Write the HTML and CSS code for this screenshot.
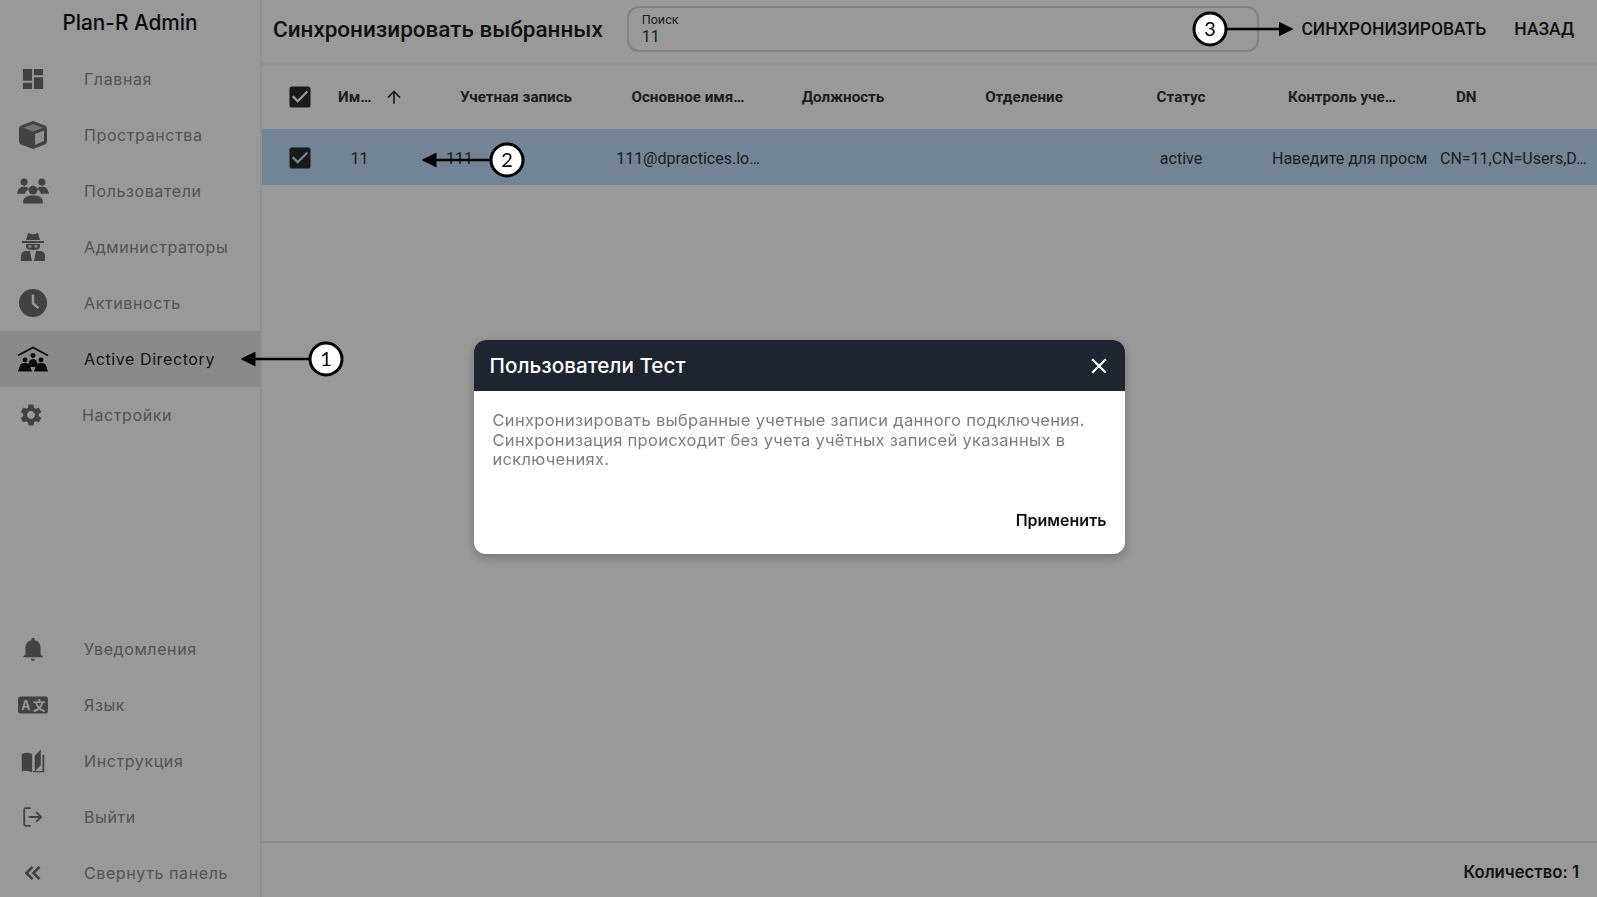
FILE: index.html
```html
<!DOCTYPE html>
<html lang="ru">
<head>
    <meta charset="UTF-8">
    <meta name="viewport" content="width=device-width, initial-scale=1.0">
    <title>Plan-R Admin</title>
    <link rel="stylesheet" href="styles.css">
</head>
<body>
    <div class="app">
        <aside class="sidebar">
            <div class="brand">Plan-R Admin</div>
            <nav class="nav">
                <a class="nav-item">
                    <svg class="nav-icon nav-icon-small" viewBox="0 0 24 24"><path d="M1 1h10v13H1zM13 1h10v7H13zM1 16h10v7H1zM13 10h10v13H13z"/></svg>
                    Главная
                </a>
                <a class="nav-item">
                    <svg class="nav-icon nav-icon-wide" viewBox="0 0 30 30"><path d="M15 1 27 5.500Q29 6.300 29 8.500V21.500Q29 23.700 27 24.500L15 29 3 24.500Q1 23.700 1 21.500V8.500Q1 6.300 3 5.500Z"/><path class="shade" d="M15 4 25 7.700 15 11.400 5 7.700Z"/><path class="light" d="M17 14 26 10.500V21L17 25Z"/></svg>
                    Пространства
                </a>
                <a class="nav-item">
                    <svg class="nav-icon nav-icon-wide" viewBox="0 0 36 30"><circle cx="8" cy="5" r="4"/><circle cx="28" cy="5" r="4"/><path d="M0 18Q1 10 8 10 12 10 14 13 10 14 9 18ZM36 18Q35 10 28 10 24 10 22 13 26 14 27 18Z"/><circle cx="18" cy="14" r="5"/><path d="M7 29V26Q8 20 18 20 28 20 29 26V29Z"/></svg>
                    Пользователи
                </a>
                <a class="nav-item">
                    <svg class="nav-icon nav-icon-wide" viewBox="0 0 26 30"><path d="M8 1 13 2.500 18 1 20 8H6ZM2 9H24V11H2Z"/><path d="M6 12H20V14.500Q20 18 13 18 6 18 6 14.500Z"/><path class="cut" d="M8 13.500H12L11 15.500H9ZM14 13.500H18L17 15.500H15Z"/><path d="M5 19H10L12 29H1V24Q1 20 5 19ZM21 19H16L14 29H25V24Q25 20 21 19Z"/></svg>
                    Администраторы
                </a>
                <a class="nav-item">
                    <svg class="nav-icon nav-icon-wide" viewBox="0 0 30 30"><circle cx="15" cy="15" r="14"/><path class="hand" d="M15 6.500V15.500L20.500 20"/></svg>
                    Активность
                </a>
                <a class="nav-item nav-item-active">
                    <svg class="nav-icon nav-icon-wide" viewBox="0 0 36 30"><path class="roof" d="M1 11 18 2 35 11"/><circle cx="18" cy="11" r="2.800"/><circle cx="9" cy="16" r="2.800"/><circle cx="27" cy="16" r="2.800"/><path d="M13 22Q13 15 18 15 23 15 23 22L21 24H15ZM1 29 4 21Q6 19.500 9 19.500 12 19.500 14 21L17 29ZM19 29 22 21Q24 19.500 27 19.500 30 19.500 32 21L35 29Z"/></svg>
                    Active Directory
                </a>
                <a class="nav-item nav-item-tight">
                    <svg class="nav-icon" viewBox="0 0 24 24"><path d="M19.140 12.940c.04-.3.06-.61.06-.94 0-.32-.02-.64-.07-.94l2.030-1.580c.18-.14.23-.41.12-.61l-1.920-3.320c-.12-.22-.37-.29-.59-.22l-2.390.96c-.5-.38-1.030-.7-1.620-.94l-.36-2.540c-.04-.24-.24-.41-.48-.41h-3.840c-.24 0-.43.17-.47.41l-.36 2.540c-.59.24-1.130.57-1.620.94l-2.390-.96c-.22-.08-.47 0-.59.22L2.740 8.870c-.12.21-.08.47.12.61l2.030 1.580c-.05.3-.09.63-.09.94s.02.64.07.94l-2.030 1.580c-.18.14-.23.41-.12.61l1.920 3.320c.12.22.37.29.59.22l2.390-.96c.5.38 1.030.7 1.620.94l.36 2.540c.05.24.24.41.48.41h3.840c.24 0 .44-.17.47-.41l.36-2.540c.59-.24 1.130-.56 1.620-.94l2.390.96c.22.08.47 0 .59-.22l1.920-3.320c.12-.22.07-.47-.12-.61l-2.010-1.580zM12 15.600c-1.980 0-3.600-1.620-3.600-3.600s1.620-3.600 3.600-3.600 3.600 1.620 3.600 3.600-1.620 3.600-3.600 3.600z"/></svg>
                    Настройки
                </a>
            </nav>
            <nav class="nav nav-bottom">
                <a class="nav-item">
                    <svg class="nav-icon" viewBox="0 0 24 24"><path d="M12 23c1.100 0 2-.9 2-2h-4c0 1.100.9 2 2 2zm7-6v-6c0-3.400-1.800-6.200-5.500-7V3c0-.83-.67-1.500-1.500-1.500s-1.500.67-1.500 1.500v1C6.800 4.800 5 7.600 5 11v6l-2 2v.5h18V19l-2-2z"/></svg>
                    Уведомления
                </a>
                <a class="nav-item">
                    <svg class="nav-icon nav-icon-wide" viewBox="0 0 30 20"><rect x="1" y="2" width="28" height="16" rx="2"/><text class="lang-glyph" x="8.500" y="14.500">A</text><text class="lang-glyph" x="21" y="14.500">文</text></svg>
                    Язык
                </a>
                <a class="nav-item">
                    <svg class="nav-icon" viewBox="0 0 30 30"><path d="M2 7Q8 4 14 7V28Q8 25 2 27Z"/><path d="M17 9 24 2V20L17 27ZM26 8H28V28H15V26.500H26Z"/></svg>
                    Инструкция
                </a>
                <a class="nav-item">
                    <svg class="nav-icon nav-icon-line" viewBox="0 0 30 30"><path d="M11 3H5Q3 3 3 5V25Q3 27 5 27H11M10 15H26M20 9 26 15 20 21"/></svg>
                    Выйти
                </a>
                <a class="nav-item">
                    <svg class="nav-icon nav-icon-chevron" viewBox="4 4 17 16"><path d="M12 5 5 12 12 19M20 5 13 12 20 19"/></svg>
                    Свернуть панель
                </a>
            </nav>
        </aside>

        <main class="content">
            <header class="topbar">
                <h1 class="page-title">Синхронизировать выбранных</h1>
                <div class="search">
                    <span class="search-label">Поиск</span>
                    <span class="search-value">11</span>
                </div>
                <button class="text-button text-button-sync">СИНХРОНИЗИРОВАТЬ</button>
                <button class="text-button">НАЗАД</button>
            </header>

            <div class="grid-row grid-head">
                <div class="cell cell-check">
                    <svg class="checkbox" viewBox="0 0 24 24"><path d="M19 3H5c-1.110 0-2 .9-2 2v14c0 1.100.89 2 2 2h14c1.110 0 2-.9 2-2V5c0-1.100-.89-2-2-2zm-9 14l-5-5 1.410-1.410L10 14.170l7.590-7.590L19 8l-9 9z"/></svg>
                </div>
                <div class="cell cell-name">
                    Им…
                    <svg class="sort-icon" viewBox="0 0 24 24"><path d="M4 12l1.410 1.410L11 7.830V20h2V7.830l5.580 5.590L20 12l-8-8-8 8z"/></svg>
                </div>
                <div class="cell cell-account">Учетная запись</div>
                <div class="cell">Основное имя…</div>
                <div class="cell">Должность</div>
                <div class="cell">Отделение</div>
                <div class="cell">Статус</div>
                <div class="cell cell-control">Контроль уче…</div>
                <div class="cell cell-dn">DN</div>
            </div>

            <div class="grid-row grid-selected">
                <div class="cell cell-check">
                    <svg class="checkbox" viewBox="0 0 24 24"><path d="M19 3H5c-1.110 0-2 .9-2 2v14c0 1.100.89 2 2 2h14c1.110 0 2-.9 2-2V5c0-1.100-.89-2-2-2zm-9 14l-5-5 1.410-1.410L10 14.170l7.590-7.590L19 8l-9 9z"/></svg>
                </div>
                <div class="cell cell-id">11</div>
                <div class="cell cell-left">111</div>
                <div class="cell">111@dpractices.lo…</div>
                <div class="cell"></div>
                <div class="cell"></div>
                <div class="cell">active</div>
                <div class="cell cell-clip">Наведите для просм</div>
                <div class="cell cell-value-dn">CN=11,CN=Users,D…</div>
            </div>

            <div class="grid-empty"></div>

            <footer class="footer">Количество: 1</footer>
        </main>
    </div>

    <div class="backdrop">
        <div class="dialog">
            <div class="dialog-head">
                <span class="dialog-title">Пользователи Тест</span>
                <svg class="dialog-close" viewBox="0 0 24 24"><path d="M19 6.410L17.590 5 12 10.590 6.410 5 5 6.410 10.590 12 5 17.590 6.410 19 12 13.410 17.590 19 19 17.590 13.410 12z"/></svg>
            </div>
            <p class="dialog-text">Синхронизировать выбранные учетные записи данного подключения. Синхронизация происходит без учета учётных записей указанных в исключениях.</p>
            <div class="dialog-actions">
                <button class="dialog-apply">Применить</button>
            </div>
        </div>
    </div>

    <svg class="callouts" viewBox="0 0 1597 897">
        <defs>
            <marker id="tip" markerWidth="6" markerHeight="6" refX="5" refY="3" orient="auto"><path d="M0 0 6 3 0 6Z"/></marker>
        </defs>
        <path class="callout-line" d="M310 359H243" marker-end="url(#tip)"/>
        <circle class="callout-dot" cx="326" cy="359" r="16"/>
        <text class="callout-num" x="326" y="366">1</text>
        <path class="callout-line" d="M491 160H424" marker-end="url(#tip)"/>
        <circle class="callout-dot" cx="507" cy="160" r="16"/>
        <text class="callout-num" x="507" y="167">2</text>
        <path class="callout-line" d="M1226 29H1291" marker-end="url(#tip)"/>
        <circle class="callout-dot" cx="1210" cy="29" r="16"/>
        <text class="callout-num" x="1210" y="36">3</text>
    </svg>
</body>
</html>
```
FILE: styles.css
```css
* {
    box-sizing: border-box;
}
body {
    margin: 0;
    height: 897px;
    overflow: hidden;
    font-family: 'Inter', 'Liberation Sans', sans-serif;
    background: #fff;
    color: #222;
}
.app {
    display: flex;
    height: 897px;
}

/* sidebar */
.sidebar {
    width: 262px;
    flex: none;
    display: flex;
    flex-direction: column;
    border-right: 2px solid #f0f0f0;
    overflow: hidden;
}
.brand {
    height: 51.500px;
    padding-bottom: 6px;
    display: flex;
    align-items: center;
    justify-content: center;
    font-size: 20.800px;
    font-weight: 500;
    color: #111;
}
.nav-bottom {
    margin-top: auto;
    margin-bottom: -4px;
}
.nav-item {
    height: 55.900px;
    padding-left: 17px;
    display: flex;
    align-items: center;
    gap: 35px;
    font-size: 16px;
    letter-spacing: 0.6px;
    color: #8c8c8c;
}
.nav-item-active {
    background: #e6e6e6;
    color: #222;
}
.nav-item-tight {
    gap: 35px;
    padding-left: 15px;
}
.nav-icon {
    width: 32px;
    height: 30px;
    padding: 2px;
    flex: none;
    fill: #6e6e6e;
}
.nav-icon-wide {
    padding: 0;
}
.nav-icon-small {
    padding: 4px 5px;
}
.nav-item-active .nav-icon {
    fill: #111;
}
.nav-icon .shade {
    fill: #bdbdbd;
}
.nav-icon .light {
    fill: #f0f0f0;
}
.nav-icon .cut {
    fill: #fff;
}
.nav-icon .hand {
    fill: none;
    stroke: #fff;
    stroke-width: 2.500;
}
.nav-icon .roof {
    fill: none;
    stroke: #111;
    stroke-width: 2;
}
.lang-glyph {
    fill: #fff;
    font-size: 12px;
    font-weight: 700;
    text-anchor: middle;
    font-family: 'Noto Sans CJK SC', 'Inter', sans-serif;
}
.nav-icon-line {
    padding: 4px;
    fill: none;
    stroke: #6e6e6e;
    stroke-width: 2.500;
    stroke-linecap: round;
    stroke-linejoin: round;
}
.nav-icon-chevron {
    padding: 8px;
    fill: none;
    stroke: #6e6e6e;
    stroke-width: 3;
}

/* main area */
.content {
    flex: 1;
    min-width: 0;
    display: flex;
    flex-direction: column;
    font-family: 'Roboto', 'Liberation Sans', sans-serif;
}
.topbar {
    height: 65px;
    flex: none;
    display: flex;
    align-items: center;
    padding: 0 23px 6px 11px;
    border-bottom: 2px solid #f0f0f0;
}
.page-title {
    margin: 0 24px 0 0;
    font-size: 22.500px;
    font-weight: 500;
    color: #1c1c1c;
    white-space: nowrap;
}
.search {
    width: 633px;
    height: 46px;
    margin-right: 42px;
    padding: 4px 13px;
    display: flex;
    flex-direction: column;
    border: 2px solid #d8d8d8;
    border-radius: 12px;
    color: #333;
}
.search-label {
    font-size: 12.600px;
    line-height: 16px;
}
.search-value {
    font-size: 16px;
    line-height: 18px;
}
.text-button {
    padding: 0;
    border: none;
    background: none;
    font-family: inherit;
    font-size: 17.500px;
    font-weight: 500;
    color: #1c1c1c;
}
.text-button-sync {
    margin-right: 28px;
}

/* table */
.grid-row {
    display: grid;
    grid-template-columns: 56px 80px 200px 180px 130px 232px 82px 218px 1fr;
    flex: none;
    font-size: 15.200px;
    color: #333;
}
.grid-head {
    height: 64px;
    font-weight: 700;
}
.grid-selected {
    height: 56px;
    padding-top: 2px;
    background: #c0dcf8;
    font-size: 16px;
}
.cell {
    display: flex;
    align-items: center;
    justify-content: center;
    white-space: nowrap;
    min-width: 0;
}
.cell-check {
    padding-left: 19px;
    overflow: visible;
}
.checkbox {
    width: 28px;
    height: 28px;
    flex: none;
    fill: #2a2a2a;
}
.cell-name {
    justify-content: flex-start;
    padding-left: 20px;
    gap: 13px;
}
.cell-id {
    padding-left: 3px;
}
.sort-icon {
    width: 20px;
    height: 20px;
    flex: none;
    fill: #333;
}
.cell-account {
    padding-left: 36px;
}
.cell-left {
    justify-content: flex-start;
    padding-left: 48px;
}
.cell-control {
    padding: 0 18px 0 40px;
}
.cell-clip {
    justify-content: flex-start;
    margin-right: 13px;
    padding-left: 50px;
    overflow: hidden;
}
.cell-dn {
    justify-content: flex-start;
    padding-left: 16px;
}
.cell-value-dn {
    justify-content: flex-start;
}
.grid-empty {
    flex: 1;
}
.footer {
    height: 56px;
    flex: none;
    padding: 4px 18px 0 0;
    display: flex;
    align-items: center;
    justify-content: flex-end;
    border-top: 2px solid #e6e6e6;
    font-family: 'Inter', 'Liberation Sans', sans-serif;
    font-size: 16.700px;
    font-weight: 600;
    color: #222;
}

/* dialog over a dimmed page */
.backdrop {
    position: fixed;
    inset: 0;
    display: flex;
    align-items: center;
    justify-content: center;
    background: rgba(0, 0, 0, 0.4);
}
.dialog {
    width: 651px;
    height: 214px;
    margin-top: -3px;
    margin-left: 1px;
    display: flex;
    flex-direction: column;
    background: #fff;
    border-radius: 12px;
    overflow: hidden;
    box-shadow: 0 4px 12px rgba(0, 0, 0, 0.25);
}
.dialog-head {
    height: 51px;
    flex: none;
    padding: 0 13px 0 16px;
    display: flex;
    align-items: center;
    justify-content: space-between;
    background: #1f2530;
}
.dialog-title {
    font-size: 20.700px;
    font-weight: 500;
    color: #fff;
}
.dialog-close {
    width: 26px;
    height: 26px;
    fill: #fff;
}
.dialog-text {
    margin: 20px 19px 0;
    font-size: 16.500px;
    letter-spacing: 0.3px;
    line-height: 19.500px;
    color: #7d7d7d;
}
.dialog-actions {
    margin-top: auto;
    padding: 0 18px 24px;
    display: flex;
    justify-content: flex-end;
}
.dialog-apply {
    padding: 0;
    border: none;
    background: none;
    font-family: inherit;
    font-size: 16px;
    font-weight: 600;
    color: #111;
}

/* numbered callouts drawn on top of the screenshot */
.callouts {
    position: fixed;
    inset: 0;
    width: 1597px;
    height: 897px;
}
.callout-line {
    fill: none;
    stroke: #000;
    stroke-width: 2.500;
}
.callout-dot {
    fill: #fff;
    stroke: #000;
    stroke-width: 3;
}
.callout-num {
    font-family: 'Lato', sans-serif;
    font-size: 20px;
    text-anchor: middle;
    fill: #000;
}
```
